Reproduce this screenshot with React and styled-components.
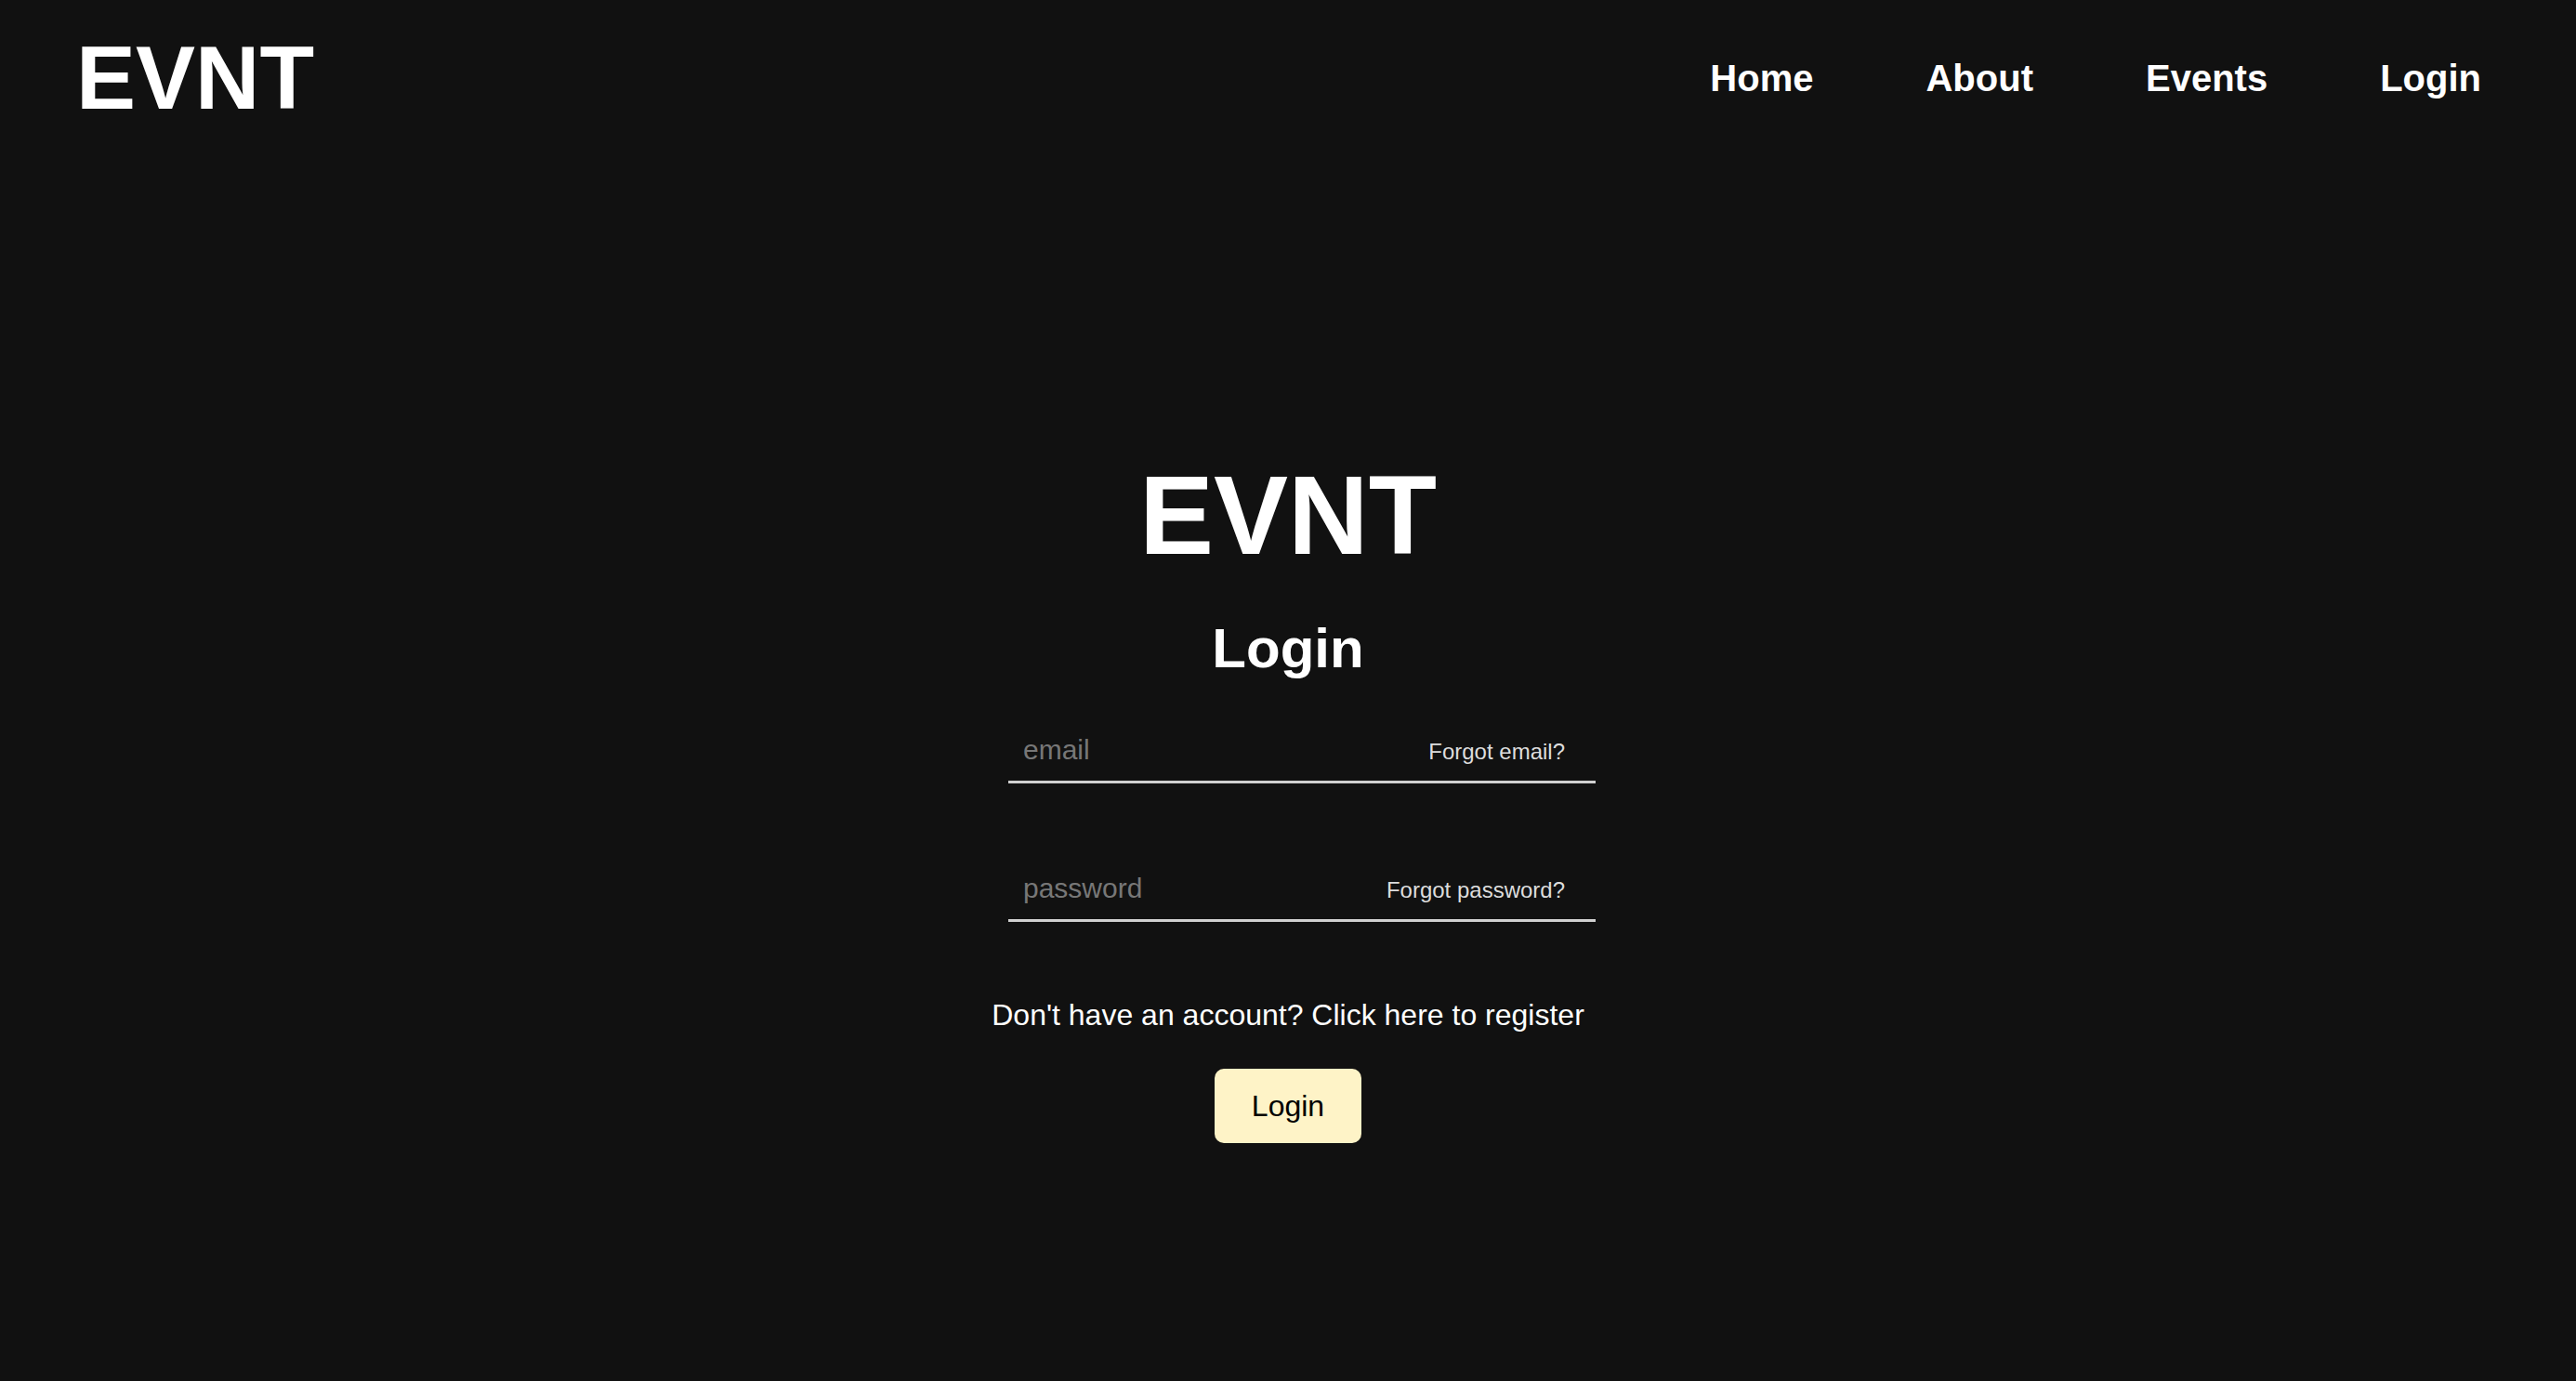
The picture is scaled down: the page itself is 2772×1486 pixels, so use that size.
import React from 'react'
import styled, { createGlobalStyle } from 'styled-components';

const GlobalStyle = createGlobalStyle`
  * {
    box-sizing: border-box;
  }

  body {
    margin: 0;
    background-color: #111111;
    color: #ffffff;
    font-family: "Liberation Sans", Arial, Helvetica, sans-serif;
  }
`

const App = () => {
  return (
    <>
      <GlobalStyle />
      <Header>
        <Logo>EVNT</Logo>
        <Nav>
          <NavLink href="#">Home</NavLink>
          <NavLink href="#">About</NavLink>
          <NavLink href="#">Events</NavLink>
          <NavLink href="#">Login</NavLink>
        </Nav>
      </Header>

      <Main>
        <Title>EVNT</Title>
        <SubTitle>Login</SubTitle>

        <Form onSubmit={(e) => e.preventDefault()}>
          <Field>
            <Input type="email" placeholder="email" />
            <Forgot href="#">Forgot email?</Forgot>
          </Field>

          <Field $gap>
            <Input type="password" placeholder="password" />
            <Forgot href="#">Forgot password?</Forgot>
          </Field>

          <Register href="#">Don't have an account? Click here to register</Register>

          <Button type="submit">Login</Button>
        </Form>
      </Main>
    </>
  )
}

export default App;

const Header = styled.header`
  height: 168px;
  display: flex;
  justify-content: space-between;
  align-items: center;
  padding: 0 102px 0 82px;
`

const Logo = styled.h1`
  margin: 0;
  font-size: 96px;
  line-height: 1;
  font-weight: 700;
`

const Nav = styled.nav`
  display: flex;
  align-items: center;
  gap: 121px;
`

const NavLink = styled.a`
  color: #ffffff;
  text-decoration: none;
  font-size: 40px;
  line-height: 1;
  font-weight: 700;
`

const Main = styled.main`
  display: flex;
  flex-direction: column;
  align-items: center;
  padding-top: 326px;
  padding-bottom: 200px;
`

const Title = styled.h1`
  margin: 0;
  font-size: 120px;
  line-height: 1;
  font-weight: 700;
`

const SubTitle = styled.h2`
  margin: 54px 0 0;
  font-size: 60px;
  line-height: 1;
  font-weight: 700;
`

const Form = styled.form`
  display: flex;
  flex-direction: column;
  align-items: center;
  margin-top: 46px;
`

const Field = styled.div`
  width: 632px;
  margin-left: 30px;
  margin-top: ${(props) => (props.$gap ? '80px' : '0')};
  display: flex;
  align-items: baseline;
  justify-content: space-between;
  padding: 0 33px 0 16px;
  border-bottom: 3px solid #d0d0d0;
`

const Input = styled.input`
  flex: 1;
  height: 66px;
  padding: 0;
  border: none;
  outline: none;
  background: transparent;
  color: #ffffff;
  font-family: inherit;
  font-size: 30px;

  &::placeholder {
    color: #777777;
  }
`

const Forgot = styled.a`
  color: #dddddd;
  text-decoration: none;
  font-size: 24px;
  white-space: nowrap;
`

const Register = styled.a`
  margin-top: 84px;
  color: #ffffff;
  text-decoration: none;
  font-size: 32px;
  line-height: 1;
`

const Button = styled.button`
  margin-top: 42px;
  padding: 24px 40px;
  border: none;
  border-radius: 10px;
  background-color: #fef3c7;
  color: #000000;
  font-family: inherit;
  font-size: 32px;
  line-height: 1;
  cursor: pointer;
`
